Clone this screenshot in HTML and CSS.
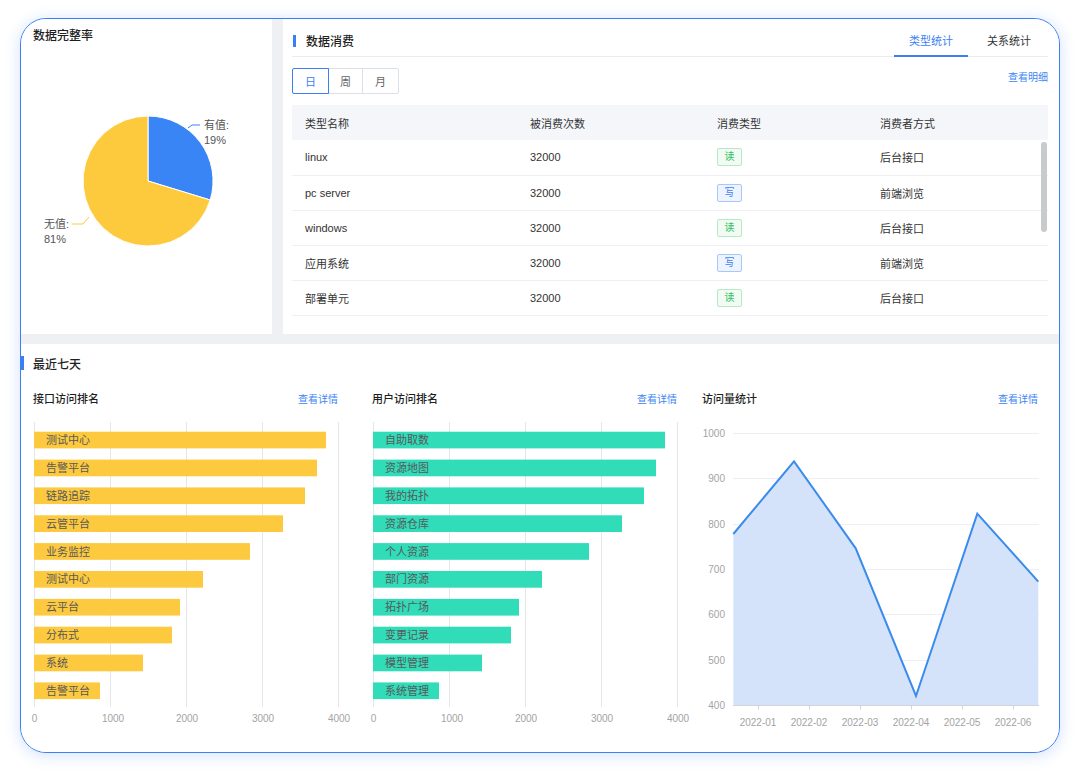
FILE: index.html
```html
<!DOCTYPE html>
<html lang="zh-CN">
<head>
<meta charset="utf-8">
<title>数据看板</title>
<link rel="stylesheet" href="styles.css">
</head>
<body>
<div class="frame">
  <section class="card card-pie">
    <h3 class="card-title">数据完整率</h3>
    <svg class="pie" width="251" height="260" viewBox="0 0 251 260">
      <path d="M127,137 L127,72 A65,65 0 0 1 189.2,156 Z" fill="#3a85f5" stroke="#fff" stroke-width="1"/>
      <path d="M127,137 L189.2,156 A65,65 0 1 1 127,72 Z" fill="#fdca3d" stroke="#fff" stroke-width="1"/>
      <polyline points="167,84 171,81 179,81" fill="none" stroke="#3a85f5" stroke-width="1"/>
      <polyline points="68,173 62,180 51,180" fill="none" stroke="#fdca3d" stroke-width="1"/>
      <text class="pie-label" x="183" y="85">有值:</text>
      <text class="pie-label" x="183" y="100">19%</text>
      <text class="pie-label" x="23" y="184">无值:</text>
      <text class="pie-label" x="23" y="199">81%</text>
    </svg>
  </section>

  <section class="card card-consume">
    <header class="consume-head">
      <h3 class="marked-title">数据消费</h3>
      <nav class="tabs">
        <span class="tab active">类型统计</span>
        <span class="tab">关系统计</span>
      </nav>
    </header>
    <div class="toolbar">
      <div class="seg">
        <button class="seg-btn seg-day active">日</button>
        <button class="seg-btn seg-week">周</button>
        <button class="seg-btn seg-month">月</button>
      </div>
      <a class="link">查看明细</a>
    </div>
    <div class="table-wrap">
      <table class="data-table">
        <colgroup><col class="c1"><col class="c2"><col class="c3"><col></colgroup>
        <thead>
          <tr><th>类型名称</th><th>被消费次数</th><th>消费类型</th><th>消费者方式</th></tr>
        </thead>
        <tbody>
          <tr><td>linux</td><td>32000</td><td><span class="tag read">读</span></td><td>后台接口</td></tr>
          <tr><td>pc server</td><td>32000</td><td><span class="tag write">写</span></td><td>前端浏览</td></tr>
          <tr><td>windows</td><td>32000</td><td><span class="tag read">读</span></td><td>后台接口</td></tr>
          <tr><td>应用系统</td><td>32000</td><td><span class="tag write">写</span></td><td>前端浏览</td></tr>
          <tr><td>部署单元</td><td>32000</td><td><span class="tag read">读</span></td><td>后台接口</td></tr>
        </tbody>
      </table>
      <div class="scrollbar"></div>
    </div>
  </section>

  <section class="card card-recent">
    <h3 class="recent-title">最近七天</h3>
    <div class="panels">
      <div class="panel panel-a">
        <div class="panel-head"><span class="panel-title">接口访问排名</span><a class="link">查看详情</a></div>
        <svg class="chart" width="306" height="320" viewBox="0 0 306 320">
          <g class="grid">
            <line x1="1.5" y1="12" x2="1.5" y2="297"/>
            <line x1="77.5" y1="12" x2="77.5" y2="297"/>
            <line x1="153.5" y1="12" x2="153.5" y2="297"/>
            <line x1="229.5" y1="12" x2="229.5" y2="297"/>
            <line x1="305.5" y1="12" x2="305.5" y2="297"/>
          </g>
          <g fill="#fdca3f">
            <rect x="1" y="21.7" width="292" height="16.7"/>
            <rect x="1" y="49.6" width="283" height="16.7"/>
            <rect x="1" y="77.4" width="271" height="16.7"/>
            <rect x="1" y="105.3" width="249" height="16.7"/>
            <rect x="1" y="133.1" width="216" height="16.7"/>
            <rect x="1" y="161" width="169" height="16.7"/>
            <rect x="1" y="188.9" width="146" height="16.7"/>
            <rect x="1" y="216.7" width="138" height="16.7"/>
            <rect x="1" y="244.6" width="109" height="16.7"/>
            <rect x="1" y="272.4" width="66" height="16.7"/>
          </g>
          <g class="bar-label">
            <text x="13" y="30">测试中心</text>
            <text x="13" y="58">告警平台</text>
            <text x="13" y="85.8">链路追踪</text>
            <text x="13" y="113.7">云管平台</text>
            <text x="13" y="141.5">业务监控</text>
            <text x="13" y="169.4">测试中心</text>
            <text x="13" y="197.3">云平台</text>
            <text x="13" y="225">分布式</text>
            <text x="13" y="253">系统</text>
            <text x="13" y="280.8">告警平台</text>
          </g>
          <g class="axis-label" text-anchor="middle">
            <text x="1.5" y="308">0</text>
            <text x="80" y="308">1000</text>
            <text x="154" y="308">2000</text>
            <text x="230" y="308">3000</text>
            <text x="306" y="308">4000</text>
          </g>
        </svg>
      </div>

      <div class="panel panel-b">
        <div class="panel-head"><span class="panel-title">用户访问排名</span><a class="link">查看详情</a></div>
        <svg class="chart" width="306" height="320" viewBox="0 0 306 320">
          <g class="grid">
            <line x1="1.5" y1="12" x2="1.5" y2="297"/>
            <line x1="77.5" y1="12" x2="77.5" y2="297"/>
            <line x1="153.5" y1="12" x2="153.5" y2="297"/>
            <line x1="229.5" y1="12" x2="229.5" y2="297"/>
            <line x1="305.5" y1="12" x2="305.5" y2="297"/>
          </g>
          <g fill="#31dcb9">
            <rect x="1" y="21.7" width="292" height="16.7"/>
            <rect x="1" y="49.6" width="283" height="16.7"/>
            <rect x="1" y="77.4" width="271" height="16.7"/>
            <rect x="1" y="105.3" width="249" height="16.7"/>
            <rect x="1" y="133.1" width="216" height="16.7"/>
            <rect x="1" y="161" width="169" height="16.7"/>
            <rect x="1" y="188.9" width="146" height="16.7"/>
            <rect x="1" y="216.7" width="138" height="16.7"/>
            <rect x="1" y="244.6" width="109" height="16.7"/>
            <rect x="1" y="272.4" width="66" height="16.7"/>
          </g>
          <g class="bar-label">
            <text x="13" y="30">自助取数</text>
            <text x="13" y="58">资源地图</text>
            <text x="13" y="85.8">我的拓扑</text>
            <text x="13" y="113.7">资源仓库</text>
            <text x="13" y="141.5">个人资源</text>
            <text x="13" y="169.4">部门资源</text>
            <text x="13" y="197.3">拓扑广场</text>
            <text x="13" y="225">变更记录</text>
            <text x="13" y="253">模型管理</text>
            <text x="13" y="280.8">系统管理</text>
          </g>
          <g class="axis-label" text-anchor="middle">
            <text x="1.5" y="308">0</text>
            <text x="80" y="308">1000</text>
            <text x="154" y="308">2000</text>
            <text x="230" y="308">3000</text>
            <text x="306" y="308">4000</text>
          </g>
        </svg>
      </div>

      <div class="panel panel-c">
        <div class="panel-head"><span class="panel-title">访问量统计</span><a class="link">查看详情</a></div>
        <svg class="chart" width="337" height="320" viewBox="0 0 337 320">
          <g class="hgrid">
            <line x1="31" y1="23.5" x2="337" y2="23.5"/>
            <line x1="31" y1="68.5" x2="337" y2="68.5"/>
            <line x1="31" y1="114.5" x2="337" y2="114.5"/>
            <line x1="31" y1="159.5" x2="337" y2="159.5"/>
            <line x1="31" y1="204.5" x2="337" y2="204.5"/>
            <line x1="31" y1="250.5" x2="337" y2="250.5"/>
          </g>
          <polygon points="31.3,124 92,51.3 153.7,138.3 214,286 275.3,103.7 336.3,171.7 336.3,295.3 31.3,295.3" fill="#d4e3fa"/>
          <polyline points="31.3,124 92,51.3 153.7,138.3 214,286 275.3,103.7 336.3,171.7" fill="none" stroke="#3a8bec" stroke-width="2"/>
          <g class="xaxis">
            <line x1="31" y1="295.5" x2="337" y2="295.5"/>
            <line x1="56.5" y1="295.5" x2="56.5" y2="299.5"/>
            <line x1="107.5" y1="295.5" x2="107.5" y2="299.5"/>
            <line x1="158.5" y1="295.5" x2="158.5" y2="299.5"/>
            <line x1="209.5" y1="295.5" x2="209.5" y2="299.5"/>
            <line x1="260.5" y1="295.5" x2="260.5" y2="299.5"/>
            <line x1="311.5" y1="295.5" x2="311.5" y2="299.5"/>
          </g>
          <g class="axis-label" text-anchor="end">
            <text x="23" y="23.5">1000</text>
            <text x="23" y="68.7">900</text>
            <text x="23" y="114">800</text>
            <text x="23" y="159.3">700</text>
            <text x="23" y="204.7">600</text>
            <text x="23" y="250">500</text>
            <text x="23" y="295.3">400</text>
          </g>
          <g class="axis-label" text-anchor="middle">
            <text x="56" y="312">2022-01</text>
            <text x="107" y="312">2022-02</text>
            <text x="158" y="312">2022-03</text>
            <text x="209" y="312">2022-04</text>
            <text x="260" y="312">2022-05</text>
            <text x="311" y="312">2022-06</text>
          </g>
        </svg>
      </div>
    </div>
  </section>
</div>
</body>
</html>
```

FILE: styles.css
```css
* { box-sizing: border-box; }

html, body { margin: 0; }

body {
  width: 1080px;
  height: 772px;
  overflow: hidden;
  padding: 18px 0 0 20px;
  background: #fff;
  font-family: "Liberation Sans", "Noto Sans CJK SC", sans-serif;
  color: #333;
}

.frame {
  width: 1040px;
  height: 735px;
  border: 1px solid #3b7ff5;
  border-radius: 26px;
  overflow: hidden;
  background: #eef0f3;
  display: grid;
  grid-template-columns: 251px 776px;
  grid-template-rows: 315px 408px;
  gap: 10px 11px;
  box-shadow: 0 2px 14px 2px rgba(60, 120, 240, 0.18);
}

.card {
  background: #fff;
  min-width: 0;
}

/* pie card */
.card-title {
  margin: 0;
  padding: 9px 12px 0;
  font-size: 12px;
  line-height: 16px;
  font-weight: 500;
  color: #1f1f1f;
}

.pie { display: block; }

.pie-label {
  font-size: 11px;
  fill: #555;
}

/* consume card */
.card-consume {
  padding: 0 11px 0 9px;
}

.consume-head {
  height: 38px;
  padding-top: 6px;
  display: flex;
  align-items: stretch;
  border-bottom: 1px solid #e9ebef;
}

.marked-title {
  display: flex;
  align-items: center;
  margin: 0;
  padding-left: 1px;
  font-size: 12px;
  font-weight: 500;
  color: #1f1f1f;
}

.marked-title::before {
  content: "";
  width: 3px;
  height: 12px;
  background: #3b7ff5;
  margin-right: 10px;
}

.tabs {
  margin-left: auto;
  margin-right: 2px;
  display: flex;
  gap: 4px;
}

.tab {
  display: flex;
  align-items: center;
  padding: 0 15px;
  font-size: 11px;
  color: #333;
  border-bottom: 2px solid transparent;
  margin-bottom: -1px;
}

.tab.active {
  color: #3b7ff5;
  border-bottom-color: #3b7ff5;
}

.toolbar {
  margin-top: 11px;
  display: flex;
  justify-content: space-between;
  align-items: flex-start;
}

.seg { display: flex; }

.seg-btn {
  height: 26px;
  padding: 0;
  margin: 0;
  font-family: inherit;
  font-size: 11px;
  color: #666;
  background: #fff;
  border: 1px solid #dcdfe6;
  position: relative;
}

.seg-btn + .seg-btn { margin-left: -1px; }

.seg-day { width: 37px; border-radius: 2px 0 0 2px; }
.seg-week { width: 35px; }
.seg-month { width: 37px; border-radius: 0 2px 2px 0; }

.seg-btn.active {
  color: #3b7ff5;
  border-color: #3b7ff5;
  z-index: 1;
}

.link {
  font-size: 10px;
  line-height: 14px;
  color: #3d85f5;
  text-decoration: none;
  margin-top: 3px;
}

.table-wrap {
  margin-top: 11px;
  position: relative;
}

.data-table {
  width: 100%;
  border-collapse: collapse;
  table-layout: fixed;
  font-size: 11px;
}

.data-table col.c1 { width: 225px; }
.data-table col.c2 { width: 187px; }
.data-table col.c3 { width: 163px; }

.data-table th {
  height: 35px;
  padding: 0 0 0 13px;
  background: #f4f6fa;
  font-weight: normal;
  color: #333;
  text-align: left;
}

.data-table td {
  height: 35px;
  padding: 0 0 0 13px;
  border-bottom: 1px solid #eef0f3;
  color: #333;
}

.tag {
  display: inline-block;
  width: 25px;
  height: 18px;
  line-height: 16px;
  text-align: center;
  font-size: 10px;
  border: 1px solid;
  border-radius: 2px;
  vertical-align: middle;
}

.tag.read {
  color: #30c260;
  border-color: #b5eac4;
  background: #f1fbf4;
}

.tag.write {
  color: #3b7ff5;
  border-color: #a9c8fa;
  background: #eef4ff;
}

.scrollbar {
  position: absolute;
  left: 749px;
  top: 37px;
  width: 6px;
  height: 90px;
  border-radius: 3px;
  background: #c9cacc;
}

/* recent card */
.card-recent {
  grid-column: 1 / -1;
}

.recent-title {
  margin: 11px 0 0;
  height: 16px;
  display: flex;
  align-items: center;
  font-size: 12px;
  font-weight: 500;
  color: #1f1f1f;
}

.recent-title::before {
  content: "";
  width: 3px;
  height: 14px;
  background: #3b7ff5;
  margin-right: 9px;
}

.panels {
  display: flex;
  margin-top: 19px;
  padding-left: 12px;
}

.panel-a { width: 306px; }
.panel-b { width: 306px; margin-left: 33px; }
.panel-c { width: 337px; margin-left: 24px; }

.panel-head {
  height: 16px;
  display: flex;
  justify-content: space-between;
  align-items: center;
}

.panel-head .link { margin-top: 4px; margin-right: 1px; }

.panel-title {
  font-size: 11px;
  font-weight: 500;
  color: #1f1f1f;
}

.chart {
  display: block;
  margin-top: 4px;
  overflow: visible;
}

.grid line {
  stroke: #e6e6e8;
  stroke-width: 1;
}

.hgrid line {
  stroke: #eceef1;
  stroke-width: 1;
}

.xaxis line {
  stroke: #cfd3da;
  stroke-width: 1;
}

.bar-label text {
  font-size: 11px;
  fill: #595959;
  dominant-baseline: central;
}

.axis-label text {
  font-size: 10px;
  fill: #a3a3a3;
  dominant-baseline: central;
}
```
